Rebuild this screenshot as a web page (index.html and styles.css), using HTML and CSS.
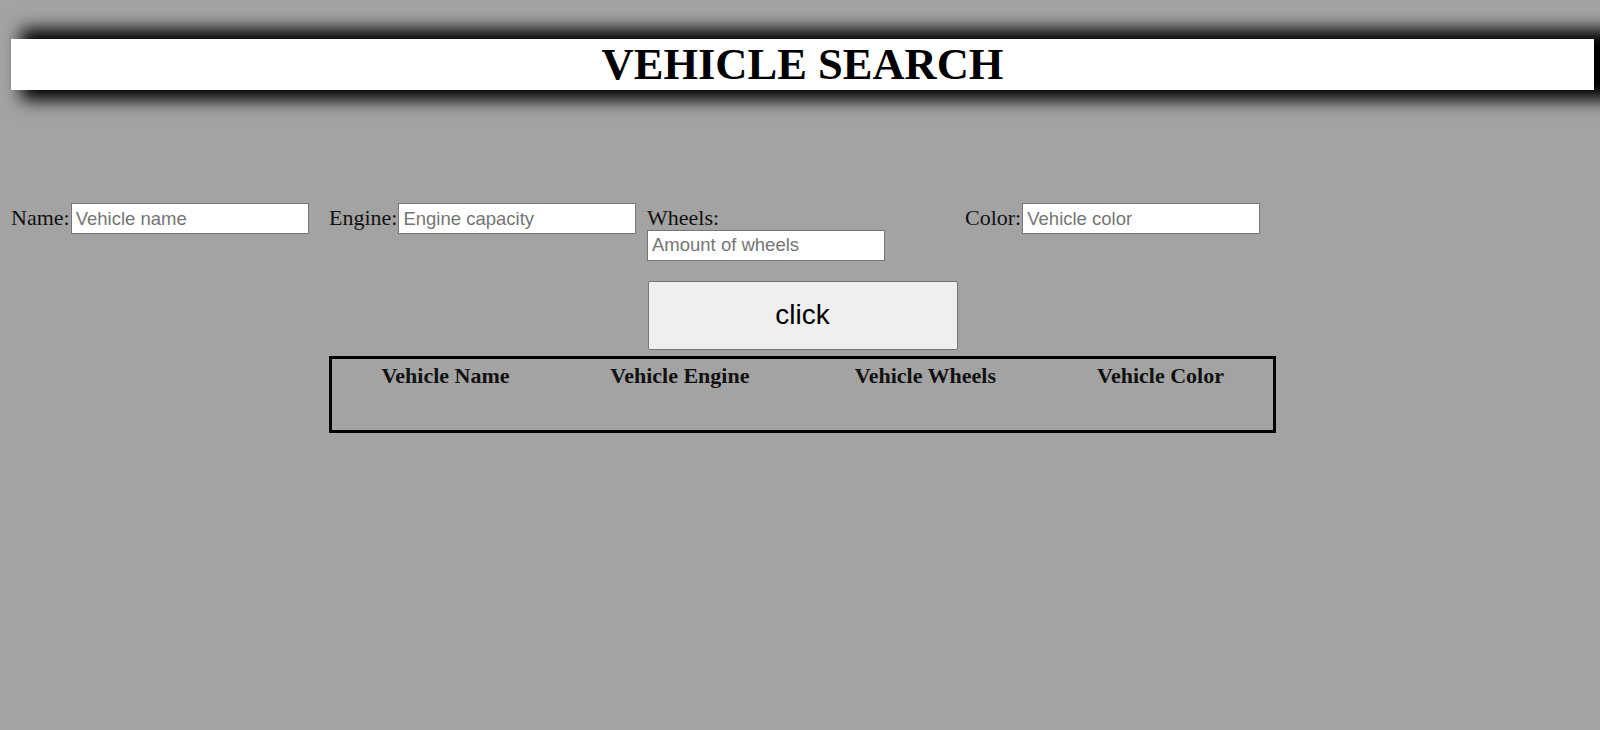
FILE: index.html
```html
<!DOCTYPE html>
<html lang="en">
<head>
<meta charset="utf-8">
<title>Vehicle Search</title>
<link rel="stylesheet" href="styles.css">
</head>
<body>
<div class="page">
  <header class="banner">
    <h1 class="banner-title">VEHICLE SEARCH</h1>
  </header>

  <form class="search-form">
    <div class="fields">
      <div class="field">
        <label class="field-label" for="name">Name:</label>
        <input class="field-input" id="name" type="text" placeholder="Vehicle name">
      </div>
      <div class="field">
        <label class="field-label" for="engine">Engine:</label>
        <input class="field-input" id="engine" type="text" placeholder="Engine capacity">
      </div>
      <div class="field field-stacked">
        <label class="field-label" for="wheels">Wheels:</label>
        <input class="field-input" id="wheels" type="text" placeholder="Amount of wheels">
      </div>
      <div class="field">
        <label class="field-label" for="color">Color:</label>
        <input class="field-input" id="color" type="text" placeholder="Vehicle color">
      </div>
    </div>
    <div class="actions">
      <button class="search-button" type="button">click</button>
    </div>
  </form>

  <table class="results">
    <thead>
      <tr>
        <th>Vehicle Name</th>
        <th>Vehicle Engine</th>
        <th>Vehicle Wheels</th>
        <th>Vehicle Color</th>
      </tr>
    </thead>
    <tbody>
      <tr class="empty-row">
        <td></td><td></td><td></td><td></td>
      </tr>
    </tbody>
  </table>
</div>
</body>
</html>
```
FILE: styles.css
```css
html, body {
  margin: 0;
  padding: 0;
}

body {
  background: #a3a3a3;
  font-family: "Liberation Serif", "Times New Roman", serif;
  font-size: 22px;
  color: #111;
  overflow: hidden;
}

.page {
  margin: 0 6px 0 11px;
  padding-top: 39px;
}

.banner {
  background: #fff;
  height: 51px;
  box-shadow: 20px 0 16px 10px #000;
  text-align: center;
}

.banner-title {
  margin: 0;
  font-size: 44.5px;
  line-height: 51px;
  font-weight: bold;
  color: #000;
}

.search-form {
  margin-top: 113px;
}

.fields {
  display: flex;
  align-items: baseline;
}

.field {
  width: 318px;
  display: flex;
  align-items: baseline;
  gap: 1px;
}

.field-stacked {
  flex-direction: column;
  align-items: flex-start;
  gap: 0;
}

.field-stacked .field-label {
  margin-bottom: -1px;
}

.field-label {
  line-height: normal;
}

.field-input {
  box-sizing: border-box;
  width: 238px;
  height: 31px;
  margin: 0;
  padding: 4px 4px;
  border: 1px solid #767676;
  border-radius: 0;
  background: #fff;
  font-family: "Liberation Sans", Arial, sans-serif;
  font-size: 18.5px;
  color: #000;
}

.field-input::placeholder {
  color: #757575;
}

.actions {
  display: flex;
  justify-content: center;
  margin-top: 20px;
}

.search-button {
  width: 310px;
  height: 69px;
  margin: 0;
  background: #efefef;
  border: 1px solid #767676;
  border-radius: 2px;
  font-family: "Liberation Sans", Arial, sans-serif;
  font-size: 28px;
  color: #000;
}

.results {
  width: 947px;
  margin: 6px auto 0;
  border: 3px solid #000;
  border-spacing: 2px;
}

.results th {
  padding: 2px 1px 1px;
  font-size: 22px;
  font-weight: bold;
  line-height: normal;
}

.empty-row td {
  height: 36px;
  padding: 0;
}
```
